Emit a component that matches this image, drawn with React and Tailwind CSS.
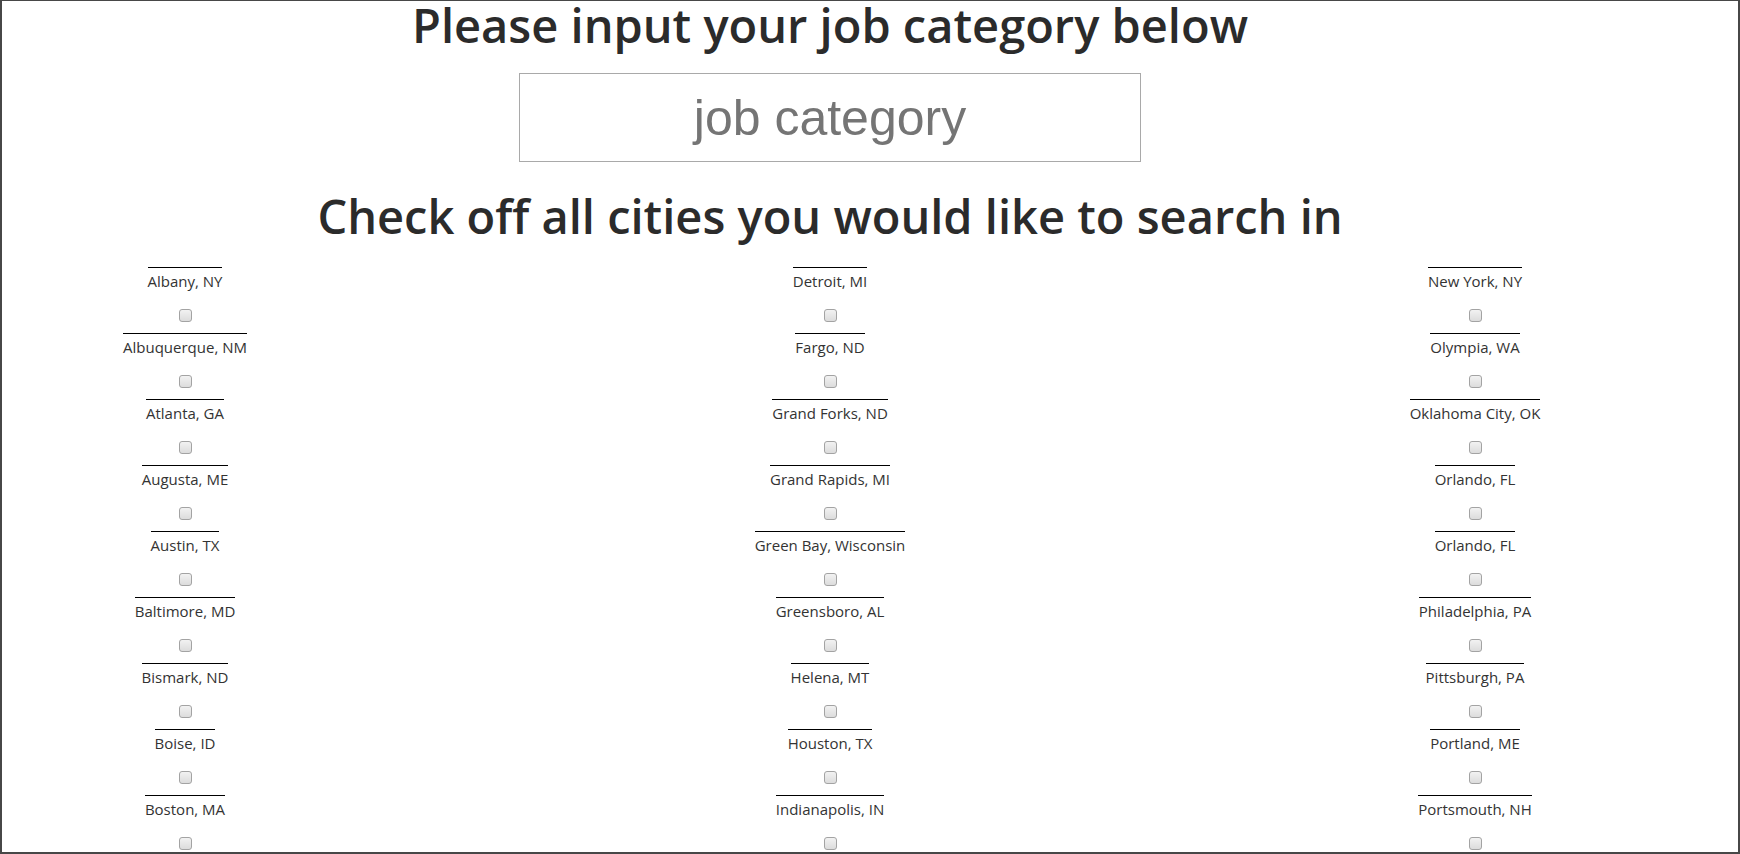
const columns = [
  [
    "Albany, NY",
    "Albuquerque, NM",
    "Atlanta, GA",
    "Augusta, ME",
    "Austin, TX",
    "Baltimore, MD",
    "Bismark, ND",
    "Boise, ID",
    "Boston, MA",
  ],
  [
    "Detroit, MI",
    "Fargo, ND",
    "Grand Forks, ND",
    "Grand Rapids, MI",
    "Green Bay, Wisconsin",
    "Greensboro, AL",
    "Helena, MT",
    "Houston, TX",
    "Indianapolis, IN",
  ],
  [
    "New York, NY",
    "Olympia, WA",
    "Oklahoma City, OK",
    "Orlando, FL",
    "Orlando, FL",
    "Philadelphia, PA",
    "Pittsburgh, PA",
    "Portland, ME",
    "Portsmouth, NH",
  ],
];

function CityItem({ name }) {
    return (
        <div className="flex h-[66px] flex-col items-center">
            <label className="inline-block border-t border-black pt-[3px] text-[15px] leading-[20px] text-[#333]">
                {name}
            </label>
            <input
                type="checkbox"
                className="mt-[18px] h-[13px] w-[13px] appearance-none rounded-[3px] border border-[#a3a3a3] bg-gradient-to-b from-[#f2f2f2] to-[#dcdcdc]"
            />
        </div>
    );
}

export default function App() {
    return (
        <div className="h-[854px] w-[1740px] overflow-hidden border-2 border-t border-[#474747] bg-white font-['Open_Sans',sans-serif]">
            <div className="w-[1656px]">
                <h1 className="text-center text-[47px] font-semibold leading-[48px] text-[#2b2b2b]">
                    Please input your job category below
                </h1>
                <div className="mt-[24px] flex justify-center">
                    <input
                        type="text"
                        placeholder="job category"
                        className="h-[89px] w-[622px] border border-[#a9a9a9] text-center font-['Liberation_Sans',Arial,sans-serif] text-[50px] text-[#333] placeholder:text-[#757575] focus:outline-none"
                    />
                </div>
                <h2 className="mt-[30px] text-center text-[47px] font-semibold leading-[48px] text-[#2b2b2b]">
                    Check off all cities you would like to search in
                </h2>
                <div className="mt-[27px] flex justify-center gap-[355px]">
                    {columns.map((col, i) => (
                        <div key={i} className="w-[290px]">
                            {col.map((name, j) => (
                                <CityItem key={j} name={name} />
                            ))}
                        </div>
                    ))}
                </div>
            </div>
        </div>
    );
}
